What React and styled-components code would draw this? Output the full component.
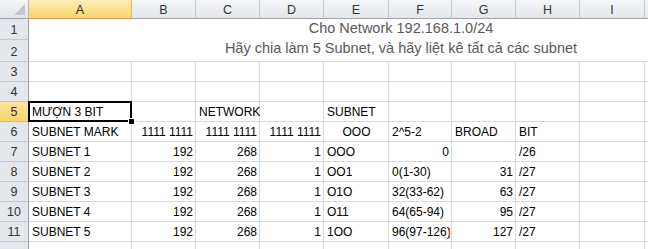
import React from 'react';
import styled, { createGlobalStyle, css } from 'styled-components';

const GlobalStyle = createGlobalStyle`
  html, body {
    margin: 0;
    padding: 0;
    background: #fff;
    overflow: hidden;
  }
  body {
    font-family: "Liberation Sans", Arial, sans-serif;
  }
`;

// J and K stay off-screen, they only carry the width of the merged title rows
const COLS = ['A', 'B', 'C', 'D', 'E', 'F', 'G', 'H', 'I', '', ''];

const Sheet = styled.div`
  display: grid;
  grid-template-columns: 29px 103px repeat(3, 64px) 65px 63px 64px 64px 65px 64px 64px;
  grid-template-rows: 19px 21px 22px repeat(10, 20px);
  width: max-content;
  font-size: 12px;
  color: #000;
`;

const Corner = styled.div`
  position: relative;
  box-sizing: border-box;
  background: linear-gradient(#f3f5f8, #e2e5ea);
  border-right: 1px solid #b4b9c1;
  border-bottom: 1px solid #9da3ac;

  &::after {
    content: '';
    position: absolute;
    right: 3px;
    bottom: 3px;
    border-style: solid;
    border-width: 0 0 11px 11px;
    border-color: transparent transparent #c3c7cd transparent;
  }
`;

const ColHeader = styled.div`
  box-sizing: border-box;
  display: flex;
  align-items: center;
  justify-content: center;
  padding-top: 1px;
  font-size: 12.5px;
  color: #333;
  background: linear-gradient(#f5f7f9, #e3e6eb);
  border-right: 1px solid #c3c7ce;
  border-bottom: 1px solid #9da3ac;

  ${(p) =>
    p.$active &&
    css`
      background: linear-gradient(#fdeeb8, #f8d66b);
      border-right-color: #e6b65a;
      border-bottom-color: #e39a33;
      color: #222;
    `}
`;

const RowHeader = styled.div`
  box-sizing: border-box;
  display: flex;
  align-items: flex-end;
  justify-content: center;
  padding-bottom: 2px;
  font-size: 12.5px;
  color: #333;
  background: #e4e7ec;
  border-right: 1px solid #9da3ac;
  border-bottom: 1px solid #c3c7ce;

  ${(p) =>
    p.$active &&
    css`
      background: linear-gradient(#fbe39a, #f8d56e);
      border-right-color: #e39a33;
      border-bottom-color: #e6b65a;
    `}
`;

const Title = styled.div`
  grid-column: span 11;
  box-sizing: border-box;
  display: flex;
  align-items: flex-end;
  justify-content: center;
  padding-bottom: ${(p) => (p.$last ? 4 : 3)}px;
  font-size: 14.5px;
  line-height: 17px;
  color: #595959;
  white-space: nowrap;
  border-bottom: ${(p) => (p.$last ? '1px solid #d8d9db' : 'none')};
`;

const Cell = styled.div`
  position: relative;
  box-sizing: border-box;
  display: flex;
  align-items: flex-end;
  justify-content: ${(p) =>
    p.$align === 'right' ? 'flex-end' : p.$align === 'center' ? 'center' : 'flex-start'};
  padding: 0 2px 1px 3px;
  line-height: 15px;
  white-space: nowrap;
  overflow: ${(p) => (p.$overflow || p.$selected ? 'visible' : 'hidden')};
  border-right: 1px solid #d8d9db;
  border-bottom: 1px solid #d8d9db;
  z-index: ${(p) => (p.$selected ? 2 : p.$overflow ? 1 : 0)};

  ${(p) =>
    p.$mark &&
    css`
      &::after {
        content: '';
        position: absolute;
        right: 1px;
        bottom: 3px;
        width: 1px;
        height: 10px;
        background: #e03a2a;
      }
    `}
`;

const Selection = styled.div`
  position: absolute;
  inset: -1px;
  border: 2px solid #000;
  pointer-events: none;
`;

const Handle = styled.div`
  position: absolute;
  right: -5px;
  bottom: -5px;
  width: 5px;
  height: 5px;
  background: #000;
  border: 1px solid #fff;
`;

const r = (v) => ({ v, a: 'right' });
const c = (v) => ({ v, a: 'center' });

const rows = [
  [{ v: 'MƯỢN 3 BIT', sel: true }, '', { v: 'NETWORK', o: true }, '', 'SUBNET', '', '', '', '', '', ''],
  ['SUBNET MARK', r('1111 1111'), r('1111 1111'), r('1111 1111'), c('OOO'), '2^5-2', 'BROAD', 'BIT', '', '', ''],
  ['SUBNET 1', r('192'), r('268'), r('1'), 'OOO', r('0'), '', '/26', '', '', ''],
  ['SUBNET 2', r('192'), r('268'), r('1'), 'OO1', '0(1-30)', r('31'), '/27', '', '', ''],
  ['SUBNET 3', r('192'), r('268'), r('1'), 'O1O', '32(33-62)', r('63'), '/27', '', '', ''],
  ['SUBNET 4', r('192'), r('268'), r('1'), 'O11', '64(65-94)', r('95'), '/27', '', '', ''],
  ['SUBNET 5', r('192'), r('268'), r('1'), '1OO', { v: '96(97-126)', mark: true }, r('127'), '/27', '', '', ''],
];

const blank = Array(11).fill('');

export default function App() {
  const body = [blank, blank, ...rows, blank];

  return (
    <>
      <GlobalStyle />
      <Sheet>
        <Corner />
        {COLS.map((col, i) => (
          <ColHeader key={i} $active={col === 'A'}>
            {col}
          </ColHeader>
        ))}

        <RowHeader>1</RowHeader>
        <Title>Cho Network 192.168.1.0/24</Title>
        <RowHeader>2</RowHeader>
        <Title $last>Hãy chia làm 5 Subnet, và hãy liệt kê tất cả các subnet</Title>

        {body.map((row, i) => {
          const num = i + 3;
          // row 12 sits below the frame, its label is not visible
          const label = num < 12 ? num : '';
          return (
            <React.Fragment key={num}>
              <RowHeader $active={num === 5}>{label}</RowHeader>
              {row.map((cell, j) => {
                const d = typeof cell === 'string' ? { v: cell } : cell;
                return (
                  <Cell
                    key={j}
                    $align={d.a}
                    $overflow={d.o}
                    $selected={d.sel}
                    $mark={d.mark}
                  >
                    {d.v}
                    {d.sel && (
                      <Selection>
                        <Handle />
                      </Selection>
                    )}
                  </Cell>
                );
              })}
            </React.Fragment>
          );
        })}
      </Sheet>
    </>
  );
}
